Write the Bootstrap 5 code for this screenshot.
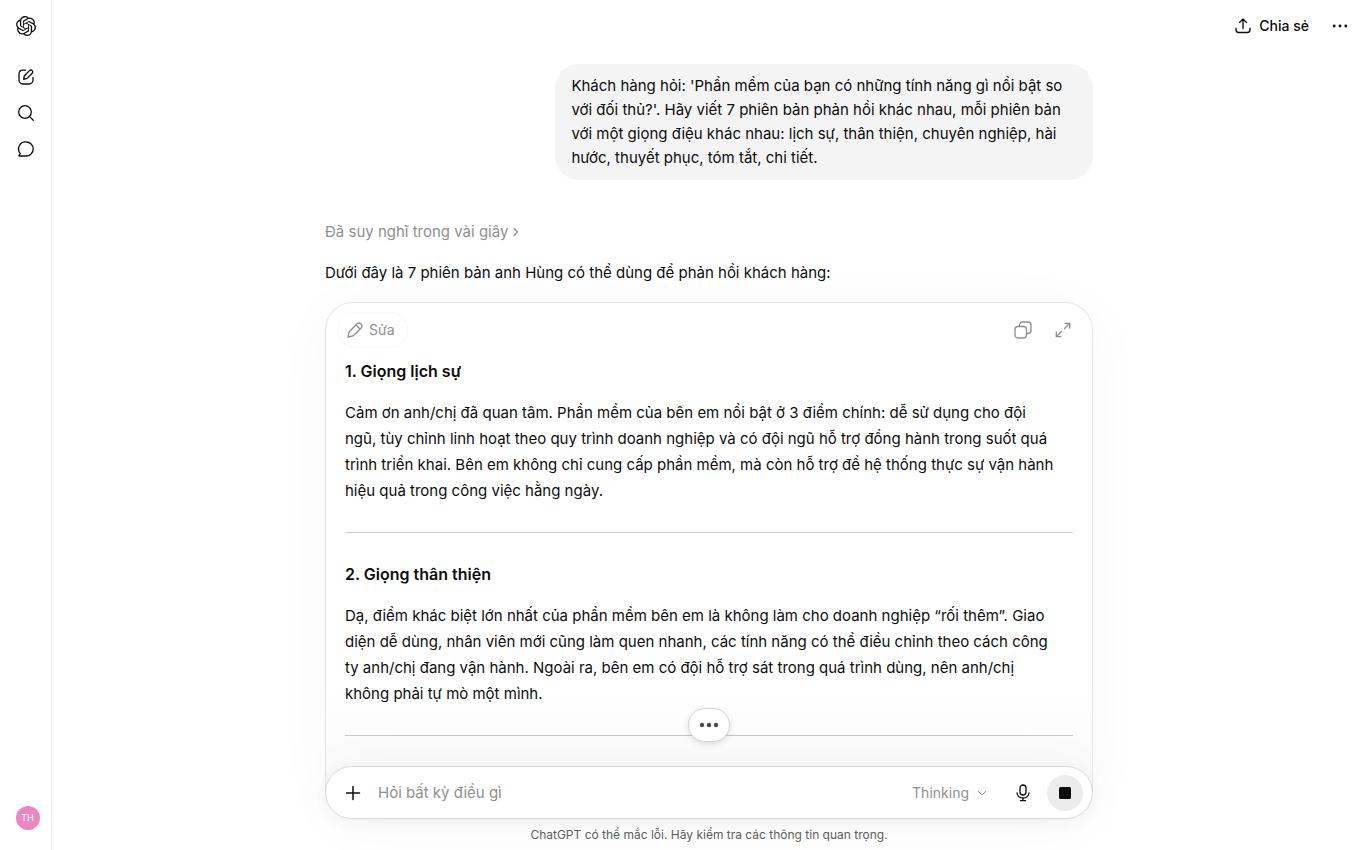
<!DOCTYPE html>
<html lang="vi">
<head>
<meta charset="utf-8">
<meta name="viewport" content="width=device-width, initial-scale=1">
<title>ChatGPT</title>
<link href="https://cdn.jsdelivr.net/npm/bootstrap@5.3.0/dist/css/bootstrap.min.css" rel="stylesheet">
<style>
body { font-family: Inter, "Liberation Sans", sans-serif; font-size: 15px; line-height: 24px; color: #0d0d0d; }
svg { display: block; fill: none; stroke: currentColor; stroke-width: 1.33; stroke-linecap: round; stroke-linejoin: round; }
svg.solid { fill: currentColor; stroke: none; }
.rail { width: 52px; border-right: 1px solid #ededed; padding: 8px 0; }
.rail .tool, .icon-btn { width: 36px; height: 36px; padding: 0; border: 0; background: none; color: inherit; display: flex; align-items: center; justify-content: center; }
.rail .home { margin-bottom: 15px; }
.avatar { width: 24px; height: 24px; line-height: 24px; background: #ea86c0; color: #fff; font-size: 9px; margin: 0 0 12px 4px; padding: 0; border: 0; }
.topbar { height: 52px; padding: 0 8px; }
.share { font-size: 14px; font-weight: 500; border: 0; background: none; padding: 0 13px; color: inherit; }
.thread { width: 100%; max-width: 768px; }
.bubble { width: 70%; background: #f4f4f4; border-radius: 24px; padding: 10px 16px; margin-top: 12px; }
.thought { color: #8f8f8f; margin-top: 40px; border: 0; background: none; padding: 0; }
.intro { margin: 17px 0; }
.doc { border: 1px solid #e6e6e6; border-bottom: 0; border-radius: 28px 28px 0 0; background: #fff linear-gradient(to top, #f8f8f8, #fff 100px); box-shadow: 0 8px 60px rgba(0,0,0,.035); padding: 9px 19px 0; line-height: 26px; }
.doc-tools { color: #8f8f8f; margin: 0 -8px 10px; }
.edit { font-size: 14px; color: #8f8f8f; border: 1px solid #f9f9f9; border-radius: 18px; height: 36px; width: 71px; background: none; padding: 0 7px; }
.doc h2 { font-size: 16px; line-height: 26px; font-weight: 600; margin: 0 0 16px; }
.doc p { margin: 0; }
.doc hr { margin: 28px 0; border-color: #c8c8c8; opacity: 1; }
.dock { margin-top: -26px; }
.more { bottom: 100%; margin-bottom: 24px; width: 42px; height: 34px; border: 1px solid #d6d6d6; border-radius: 17px; background: #fff; color: #4a4a4a; box-shadow: 0 2px 6px rgba(0,0,0,.12); padding: 0; }
.composer { height: 53px; border: 1px solid #d9d9d9; border-radius: 27px; background: #fff; box-shadow: 0 4px 16px rgba(0,0,0,.03), 0 4px 60px rgba(0,0,0,.035); padding: 0 9px; }
.composer input { border: 0; outline: 0; background: none; min-width: 0; margin-left: 7px; padding: 0; color: inherit; }
.composer input::placeholder { color: #8f8f8f; opacity: 1; }
.model { font-size: 14px; color: #8f8f8f; border: 0; background: none; padding: 0; margin-right: 18px; }
.stop { background: #ececec; margin-left: 6px; }
.note { font-size: 12px; line-height: 16px; color: #5d5d5d; margin: 8px 0 7px; }
</style>
</head>
<body>
<div class="d-flex vh-100 overflow-hidden">
  <nav class="rail d-flex flex-column align-items-center flex-shrink-0" aria-label="Menu">
    <a href="#" class="tool home" aria-label="ChatGPT"><svg class="solid" width="20" height="20" viewBox="0 0 24 24"><path d="M22.2819 9.8211a5.9847 5.9847 0 0 0-.5157-4.9108 6.0462 6.0462 0 0 0-6.5098-2.9A6.0651 6.0651 0 0 0 4.9807 4.1818a5.9847 5.9847 0 0 0-3.9977 2.9 6.0462 6.0462 0 0 0 .7427 7.0966 5.98 5.98 0 0 0 .511 4.9107 6.051 6.051 0 0 0 6.5146 2.9001A5.9847 5.9847 0 0 0 13.2599 24a6.0557 6.0557 0 0 0 5.7718-4.2058 5.9894 5.9894 0 0 0 3.9977-2.9001 6.0557 6.0557 0 0 0-.7475-7.0729zm-9.022 12.6081a4.4755 4.4755 0 0 1-2.8764-1.0408l.1419-.0804 4.7783-2.7582a.7948.7948 0 0 0 .3927-.6813v-6.7369l2.02 1.1686a.071.071 0 0 1 .038.052v5.5826a4.504 4.504 0 0 1-4.4945 4.4944zm-9.6607-4.1254a4.4708 4.4708 0 0 1-.5346-3.0137l.142.0852 4.783 2.7582a.7712.7712 0 0 0 .7806 0l5.8428-3.3685v2.3324a.0804.0804 0 0 1-.0332.0615L9.74 19.9502a4.4992 4.4992 0 0 1-6.1408-1.6464zM2.3408 7.8956a4.485 4.485 0 0 1 2.3655-1.9728V11.6a.7664.7664 0 0 0 .3879.6765l5.8144 3.3543-2.0201 1.1685a.0757.0757 0 0 1-.071 0l-4.8303-2.7865A4.504 4.504 0 0 1 2.3408 7.872zm16.5963 3.8558L13.1038 8.364 15.1192 7.2a.0757.0757 0 0 1 .071 0l4.8303 2.7913a4.4944 4.4944 0 0 1-.6765 8.1042v-5.6772a.79.79 0 0 0-.407-.667zm2.0107-3.0231l-.142-.0852-4.7735-2.7818a.7759.7759 0 0 0-.7854 0L9.409 9.2297V6.8974a.0662.0662 0 0 1 .0284-.0615l4.8303-2.7866a4.4992 4.4992 0 0 1 6.6802 4.66zM8.3065 12.863l-2.02-1.1638a.0804.0804 0 0 1-.038-.0567V6.0742a4.4992 4.4992 0 0 1 7.3757-3.4537l-.142.0805L8.704 5.459a.7948.7948 0 0 0-.3927.6813zm1.0976-2.3654l2.602-1.4998 2.6069 1.4998v2.9994l-2.5974 1.4997-2.6067-1.4997Z"/></svg></a>
    <a href="#" class="tool" aria-label="Đoạn chat mới"><svg width="20" height="20" viewBox="0 0 20 20"><path d="M9.500 3.200H7A4 4 0 0 0 3 7v6a4 4 0 0 0 4 4h6a4 4 0 0 0 4-4v-2.500M7.700 12.300l.4-2.600c.1-.6.4-1.100.8-1.500l4.600-4.600a1.850 1.850 0 0 1 2.700 2.700l-4.600 4.600c-.4.4-.9.7-1.500.8z"/></svg></a>
    <a href="#" class="tool" aria-label="Tìm kiếm"><svg width="20" height="20" viewBox="0 0 20 20"><circle cx="9" cy="9" r="6.300"/><path d="m13.600 13.600 3.700 3.700"/></svg></a>
    <a href="#" class="tool" aria-label="Đoạn chat"><svg width="20" height="20" viewBox="0 0 20 20"><path d="M10.200 3a7 7 0 1 1 0 14H3.500c-.5 0-.7-.5-.4-.9l1.200-1.500A7 7 0 0 1 10.200 3z"/></svg></a>
    <button class="avatar rounded-circle mt-auto">TH</button>
  </nav>
  <main class="d-flex flex-column flex-grow-1 align-items-center overflow-hidden">
    <header class="topbar d-flex w-100 justify-content-end align-items-center flex-shrink-0">
      <button class="share d-flex align-items-center gap-2"><svg width="16" height="16" viewBox="0 0 16 16"><path d="M8 10.500V1M4.500 4.400 8 1l3.500 3.400M1 10.200v1.600A2.700 2.700 0 0 0 3.700 14.500h8.600a2.700 2.700 0 0 0 2.700-2.700v-1.600"/></svg>Chia sẻ</button>
      <button class="icon-btn" aria-label="Thêm"><svg class="solid" width="20" height="20" viewBox="0 0 20 20"><circle cx="4.200" cy="10" r="1.400"/><circle cx="10" cy="10" r="1.400"/><circle cx="15.800" cy="10" r="1.400"/></svg></button>
    </header>
    <section class="thread d-flex flex-column flex-grow-1 align-items-start">
      <div class="bubble align-self-end">Khách hàng hỏi: 'Phần mềm của bạn có những tính năng gì nổi bật so<br>với đối thủ?'. Hãy viết 7 phiên bản phản hồi khác nhau, mỗi phiên bản<br>với một giọng điệu khác nhau: lịch sự, thân thiện, chuyên nghiệp, hài<br>hước, thuyết phục, tóm tắt, chi tiết.</div>
      <button class="thought d-flex align-items-center gap-1">Đã suy nghĩ trong vài giây <svg width="8" height="12" viewBox="0 0 8 12"><path d="m2 2.500 3.500 3.500L2 9.500"/></svg></button>
      <p class="intro">Dưới đây là 7 phiên bản anh Hùng có thể dùng để phản hồi khách hàng:</p>
      <article class="doc w-100 flex-grow-1">
        <div class="doc-tools d-flex align-items-center">
          <button class="edit d-flex align-items-center gap-1 me-auto"><svg width="20" height="20" viewBox="0 0 20 20"><path d="m3 17 .8-4.200c.1-.5.3-.9.7-1.300l7.600-7.700a2.500 2.500 0 0 1 3.600 0l.5.500a2.500 2.500 0 0 1 0 3.600l-7.700 7.600c-.4.4-.8.600-1.300.7zM11 5l4 4"/></svg>Sửa</button>
          <button class="icon-btn me-1" aria-label="Sao chép"><svg width="20" height="20" viewBox="0 0 20 20"><rect x="2" y="6.500" width="11.500" height="11.500" rx="3"/><path d="M6.500 6.500V5a3 3 0 0 1 3-3H15a3 3 0 0 1 3 3v5.500a3 3 0 0 1-3 3h-1.500"/></svg></button>
          <button class="icon-btn" aria-label="Mở rộng"><svg width="20" height="20" viewBox="0 0 20 20"><path d="m11.500 8.500 5-5M12 3.300h4.700V8M8.500 11.500l-5 5M3.300 12v4.700H8"/></svg></button>
        </div>
        <h2>1. Giọng lịch sự</h2>
        <p>Cảm ơn anh/chị đã quan tâm. Phần mềm của bên em nổi bật ở 3 điểm chính: dễ sử dụng cho đội<br>ngũ, tùy chỉnh linh hoạt theo quy trình doanh nghiệp và có đội ngũ hỗ trợ đồng hành trong suốt quá<br>trình triển khai. Bên em không chỉ cung cấp phần mềm, mà còn hỗ trợ để hệ thống thực sự vận hành<br>hiệu quả trong công việc hằng ngày.</p>
        <hr>
        <h2>2. Giọng thân thiện</h2>
        <p>Dạ, điểm khác biệt lớn nhất của phần mềm bên em là không làm cho doanh nghiệp “rối thêm”. Giao<br>diện dễ dùng, nhân viên mới cũng làm quen nhanh, các tính năng có thể điều chỉnh theo cách công<br>ty anh/chị đang vận hành. Ngoài ra, bên em có đội hỗ trợ sát trong quá trình dùng, nên anh/chị<br>không phải tự mò một mình.</p>
        <hr class="mb-0">
      </article>
    </section>
    <footer class="dock thread position-relative flex-shrink-0">
      <button class="more position-absolute start-50 translate-middle-x d-flex align-items-center justify-content-center" aria-label="Đang trả lời"><svg class="solid" width="20" height="8" viewBox="0 0 20 8"><circle cx="3" cy="4" r="2.200"/><circle cx="10" cy="4" r="2.200"/><circle cx="17" cy="4" r="2.200"/></svg></button>
      <form class="composer d-flex align-items-center">
        <button type="button" class="icon-btn" aria-label="Thêm tệp"><svg width="20" height="20" viewBox="0 0 20 20"><path stroke-width="1.500" d="M10 3.500v13M3.500 10h13"/></svg></button>
        <input type="text" class="flex-grow-1" placeholder="Hỏi bất kỳ điều gì" aria-label="Hỏi bất kỳ điều gì">
        <button type="button" class="model d-flex align-items-center gap-2">Thinking <svg width="10" height="10" viewBox="0 0 10 10"><path stroke-width="1" d="m1 3 4 4 4-4"/></svg></button>
        <button type="button" class="icon-btn" aria-label="Đọc chính tả"><svg width="20" height="20" viewBox="0 0 20 20"><rect x="7" y="2" width="6" height="10" rx="3"/><path d="M4 10a6.100 6.100 0 0 0 12 0M10 15v2.700M7.500 17.700h5"/></svg></button>
        <button type="button" class="icon-btn stop rounded-circle" aria-label="Dừng"><svg class="solid" width="12" height="12" viewBox="0 0 12 12"><rect width="12" height="12" rx="1.500"/></svg></button>
      </form>
      <p class="note text-center">ChatGPT có thể mắc lỗi. Hãy kiểm tra các thông tin quan trọng.</p>
    </footer>
  </main>
</div>
<script src="https://cdn.jsdelivr.net/npm/bootstrap@5.3.0/dist/js/bootstrap.bundle.min.js"></script>
</body>
</html>
